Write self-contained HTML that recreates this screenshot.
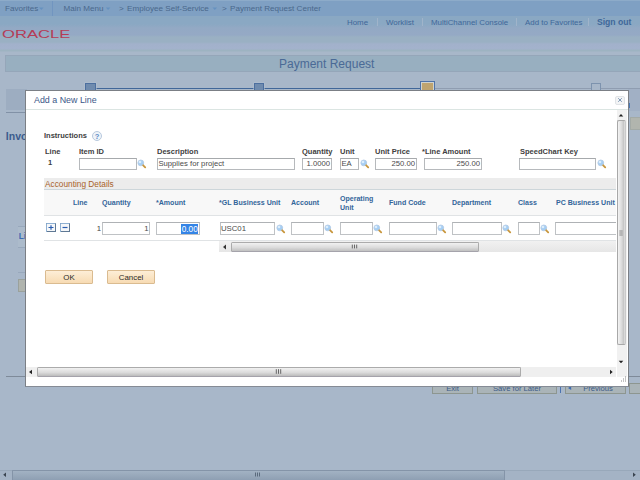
<!DOCTYPE html>
<html><head><meta charset="utf-8"><title>Payment Request</title>
<style>
html,body{margin:0;padding:0;}
body{width:640px;height:480px;overflow:hidden;position:relative;background:#a8b7c9;font-family:"Liberation Sans",sans-serif;font-size:7.5px;color:#333;}
.a{position:absolute;white-space:nowrap;line-height:1;}
#hdr{left:0;top:0;width:640px;height:52px;background:linear-gradient(#8aa8c3 0,#8aa8c3 24px,#93a9c4 28px,#95a9c5 35px,#9ab0c3 37px,#9ab0c3 42px,#a2b1cb 44px,#a3b2cc 49px,#9db3c1 50px,#9db3c1 51px,#a8b7c9 52px);}
#nav{left:0;top:0;width:640px;height:16px;background:#7fa0c3;border-top:1px solid #8dabc9;box-sizing:border-box}
.nv{top:5px;font-size:8.1px;color:#4a688c;}
.hl{top:18.5px;font-size:7.9px;color:#3f6799;}
#ttl{left:5px;top:55px;width:640px;height:17px;background:#98afc0;border:1px solid #95a6b9;box-sizing:border-box;}
#dlg{left:25px;top:90px;width:604px;height:296.500px;background:#fff;border:1px solid #7b7f85;border-bottom-color:#858b95;box-sizing:border-box;}
.lb{font-weight:bold;font-size:7.5px;color:#404040;}
.ch{font-weight:bold;font-size:7.050px;color:#33659a;}
.in{box-sizing:border-box;border:1px solid #b6b9bc;border-top-color:#a6a9ac;background:#fff;height:12px;font-size:7.7px;color:#4a4a4a;padding:1.700px 1px 0 0.400px;line-height:1;overflow:hidden;}
.r{text-align:right;}
.bt{box-sizing:border-box;border:1px solid #dabb90;border-radius:1px;background:linear-gradient(#fdeed7,#f7dbb3);height:13.5px;font-size:7.9px;color:#2a2a2a;text-align:center;padding-top:2.6px;}
.bb{box-sizing:border-box;border:1px solid #8d9690;background:#aab4b8;height:11px;font-size:7.65px;color:#3d5c88;text-align:center;padding-top:1px;}
</style></head><body>
<div class="a" id="hdr"></div>
<div class="a" id="nav"></div>
<div class="a nv" style="left:5px">Favorites</div>
<div class="a nv" style="left:63.5px">Main Menu</div>
<div class="a nv" style="left:119px">&gt;</div>
<div class="a nv" style="left:127px">Employee Self-Service</div>
<div class="a nv" style="left:222px">&gt;</div>
<div class="a nv" style="left:230px">Payment Request Center</div>
<div class="a" style="left:52px;top:1px;width:1px;height:15px;background:#7195c0;"></div>
<svg class="a" style="left:0;top:0" width="640" height="20"><path d="M39 7.500h4.600l-2.300 2.600zM105.800 7.500h4.600l-2.300 2.600zM212.500 7.500h4.600l-2.300 2.600z" fill="#6691c0"/></svg>
<div class="a" style="left:2px;top:28.600px;font-size:11.300px;color:#b53c56;transform:scaleX(1.47);transform-origin:0 0;">ORACLE</div>
<div class="a hl" style="left:347px">Home</div>
<div class="a hl" style="left:386px">Worklist</div>
<div class="a hl" style="left:431px">MultiChannel Console</div>
<div class="a hl" style="left:525px">Add to Favorites</div>
<div class="a hl" style="left:597px;font-weight:bold;font-size:8.600px;top:17.500px">Sign out</div>
<div class="a" style="left:377px;top:18px;width:1px;height:8px;background:#a0b4ca;"></div>
<div class="a" style="left:422px;top:18px;width:1px;height:8px;background:#a0b4ca;"></div>
<div class="a" style="left:516px;top:18px;width:1px;height:8px;background:#a0b4ca;"></div>
<div class="a" style="left:588px;top:18px;width:1px;height:8px;background:#a0b4ca;"></div>
<div class="a" id="ttl"></div>
<div class="a" style="left:279px;top:58px;font-size:12px;color:#4a6a96;">Payment Request</div>
<div class="a" style="left:90px;top:87.8px;width:337px;height:1.3px;background:#416799;"></div>
<div class="a" style="left:434px;top:87.8px;width:206px;height:1.3px;background:#8f9db1;"></div>
<div class="a" style="left:85px;top:83px;width:10.5px;height:9px;background:#6f8bae;border:1px solid #4c6f9f;box-sizing:border-box;box-shadow:0 0 0 0.500px #b3c1d2"></div>
<div class="a" style="left:253.8px;top:83px;width:10.5px;height:9px;background:#6f8bae;border:1px solid #4c6f9f;box-sizing:border-box;box-shadow:0 0 0 0.500px #b3c1d2"></div>
<div class="a" style="left:419.5px;top:81px;width:15.5px;height:12px;background:#bfa46f;border:1px solid #4f73a8;box-sizing:border-box;box-shadow:inset 0 0 0 1px #cfd3d0"></div>
<div class="a" style="left:591px;top:83px;width:10px;height:9px;background:#a8b7c9;border:1px solid #7d93ae;box-sizing:border-box"></div>
<div class="a" style="left:6px;top:88.8px;width:21px;height:21.7px;background:#9dadc1;"></div>
<div class="a" style="left:628px;top:88.8px;width:12px;height:22.5px;background:#a1b0c5;"></div>
<div class="a" style="left:6px;top:112px;width:21px;height:1px;background:#8191a6;"></div>
<div class="a" style="left:5.800px;top:130.500px;font-size:10.500px;font-weight:bold;color:#3b5c8e;">Invoice</div>
<div class="a" style="left:629.5px;top:117px;width:12px;height:13px;background:#b1b5ae;border:1px solid #a3aaa6;box-sizing:border-box"></div>
<div class="a" style="left:6px;top:376px;width:21px;height:1px;background:#7e8a99;"></div>
<div class="a" style="left:17.7px;top:226.5px;width:9px;height:21px;background:#acbbcb;"></div>
<div class="a" style="left:17.7px;top:226.3px;width:9px;height:1px;background:#98a8bc;"></div>
<div class="a" style="left:17.7px;top:247.3px;width:9px;height:1px;background:#98a8bc;"></div>
<div class="a" style="left:17.7px;top:272px;width:9px;height:1px;background:#98a8bc;"></div>
<div class="a" style="left:18.3px;top:278.8px;width:9px;height:13px;background:#b0b4ae;border:1px solid #9aa19c;box-sizing:border-box"></div>
<div class="a" style="left:18.700px;top:233px;font-size:8.200px;font-weight:bold;color:#3b6cb3;">Line</div>
<div class="a" style="left:628px;top:376px;width:12px;height:1px;background:#7e8a99;"></div>
<div class="a bb" style="left:432px;top:383px;width:41px">Exit</div>
<div class="a bb" style="left:477px;top:383px;width:80px">Save for Later</div>
<div class="a bb" style="left:565px;top:383px;width:61px;padding-left:5px">Previous</div>
<svg class="a" style="left:567px;top:385px" width="6" height="6"><path d="M4.200 1v4l-3.200-2z" fill="#3f6cb0"/></svg>
<div class="a bb" style="left:629px;top:383px;width:20px"></div>
<div class="a" style="left:560px;top:384px;width:1px;height:9px;background:#4b73b0;"></div>
<div class="a" style="left:0px;top:469.5px;width:640px;height:11px;background:#a4b3c5;border-top:1px solid #98a8ba;box-sizing:border-box"></div>
<div class="a" style="left:11.5px;top:469.5px;width:493px;height:11px;background:linear-gradient(#a2b2c3,#8c9db1);border:1px solid #8494a8;border-bottom:none;box-sizing:border-box;border-radius:1px"></div>
<svg class="a" style="left:0;top:469px" width="640" height="11"><path d="M6 3.500v4.400l-2.800-2.200zM633 3.500v4.400l2.800-2.200z" fill="#3a4450"/><path d="M255.500 3.500v4M257.500 3.500v4M259.500 3.500v4" stroke="#5a6a7c" stroke-width="1"/></svg>
<div class="a" id="dlg"></div>
<div class="a" style="left:26px;top:109px;width:602px;height:1px;background:#dbe5e2;"></div>
<div class="a" style="left:34px;top:96.400px;font-size:8.900px;color:#3b5888;">Add a New Line</div>
<div class="a" style="left:615px;top:95.500px;width:10px;height:9.500px;border:1px solid #e1e4e7;border-radius:2px;box-sizing:border-box;background:#f3f4f5"></div>
<svg class="a" style="left:615px;top:95px" width="10" height="10"><path d="M3.200 3.200l3.600 3.600M6.800 3.200l-3.600 3.600" stroke="#7f9ab8" stroke-width="1"/></svg>
<div class="a" style="left:628.5px;top:102.5px;width:1.5px;height:5px;background:#4a7ab8;"></div>
<div class="a lb" style="left:44px;top:132px">Instructions</div>
<svg class="a" style="left:91px;top:130px" width="12" height="12"><circle cx="6" cy="6" r="4.500" fill="#eff4f9" stroke="#b7c9de" stroke-width="1"/><text x="6" y="8.700" font-size="7.500" font-weight="bold" text-anchor="middle" fill="#5b8ac6" font-family="Liberation Sans, sans-serif">?</text></svg>
<div class="a lb" style="left:45px;top:148.400px">Line</div>
<div class="a lb" style="left:79px;top:148.400px">Item ID</div>
<div class="a lb" style="left:157px;top:148.400px">Description</div>
<div class="a lb" style="left:302px;top:148.400px">Quantity</div>
<div class="a lb" style="left:340px;top:148.400px">Unit</div>
<div class="a lb" style="left:375px;top:148.400px">Unit Price</div>
<div class="a lb" style="left:422px;top:148.400px">*Line Amount</div>
<div class="a lb" style="left:520px;top:148.400px">SpeedChart Key</div>
<div class="a lb" style="left:48px;top:159px">1</div>
<div class="a in" style="left:79px;top:157.5px;width:58px;"></div>
<svg class="a" style="left:137px;top:158.5px" width="10" height="10"><circle cx="3.800" cy="3.900" r="2.900" fill="#a6cef3" stroke="#b4cce6" stroke-width="0.900"/><circle cx="3" cy="3" r="1.300" fill="#dceefc"/><path d="M6.200 6.300l2 2" stroke="#c8963c" stroke-width="1.800" stroke-linecap="round"/></svg>
<div class="a in" style="left:157px;top:157.5px;width:138px;">Supplies for project</div>
<div class="a in r" style="left:302px;top:157.5px;width:30px;">1.0000</div>
<div class="a in" style="left:340px;top:157.5px;width:19px;">EA</div>
<svg class="a" style="left:359.5px;top:158.5px" width="10" height="10"><circle cx="3.800" cy="3.900" r="2.900" fill="#a6cef3" stroke="#b4cce6" stroke-width="0.900"/><circle cx="3" cy="3" r="1.300" fill="#dceefc"/><path d="M6.200 6.300l2 2" stroke="#c8963c" stroke-width="1.800" stroke-linecap="round"/></svg>
<div class="a in r" style="left:374.5px;top:157.5px;width:42.5px;">250.00</div>
<div class="a in r" style="left:424px;top:157.5px;width:58px;">250.00</div>
<div class="a in" style="left:519px;top:157.5px;width:77px;"></div>
<svg class="a" style="left:597px;top:158.5px" width="10" height="10"><circle cx="3.800" cy="3.900" r="2.900" fill="#a6cef3" stroke="#b4cce6" stroke-width="0.900"/><circle cx="3" cy="3" r="1.300" fill="#dceefc"/><path d="M6.200 6.300l2 2" stroke="#c8963c" stroke-width="1.800" stroke-linecap="round"/></svg>
<div class="a" style="left:44px;top:177.5px;width:572px;height:11.5px;background:#ececec;"></div>
<div class="a" style="left:44px;top:189px;width:572px;height:1px;background:#cdd6da;"></div>
<div class="a" style="left:45px;top:179.500px;font-size:8.300px;color:#a8622a">Accounting Details</div>
<div class="a" style="left:44px;top:190px;width:572px;height:25px;background:#f8f8f8;"></div>
<div class="a" style="left:44px;top:215px;width:572px;height:1px;background:#e0e3e5;"></div>
<div class="a ch" style="left:73px;top:199px">Line</div>
<div class="a ch" style="left:102px;top:199px">Quantity</div>
<div class="a ch" style="left:156px;top:199px">*Amount</div>
<div class="a ch" style="left:219px;top:199px">*GL Business Unit</div>
<div class="a ch" style="left:291px;top:199px">Account</div>
<div class="a ch" style="left:389px;top:199px">Fund Code</div>
<div class="a ch" style="left:452px;top:199px">Department</div>
<div class="a ch" style="left:518px;top:199px">Class</div>
<div class="a ch" style="left:556px;top:199px">PC Business Unit</div>
<div class="a ch" style="left:340px;top:194px;line-height:9px;white-space:normal;width:40px">Operating<br>Unit</div>
<svg class="a" style="left:46px;top:223px" width="26" height="10"><rect x="0.500" y="0.500" width="9" height="8" fill="#f5f7f9" stroke="#5f7894"/><path d="M0.500 9V0.500H9.500" fill="none" stroke="#8fb0d2"/><path d="M2.500 4.500h5M5 2.200v4.600" stroke="#2a5db0" stroke-width="1.200"/><rect x="14.500" y="0.500" width="9" height="8" fill="#f5f7f9" stroke="#5f7894"/><path d="M14.500 9V0.500H23.500" fill="none" stroke="#8fb0d2"/><path d="M16.500 4.500h5" stroke="#2a5db0" stroke-width="1.200"/></svg>
<div class="a" style="left:96.700px;top:224.800px;font-size:7.800px;color:#444">1</div>
<div class="a in r" style="left:102px;top:222.2px;width:48px;border-color:#bfc2c5;border-top-color:#afb2b5;height:12.500px;padding-top:1.600px;padding-right:0.500px;font-size:7.800px;">1</div>
<div class="a in r" style="left:156px;top:222.2px;width:43.5px;border-color:#bfc2c5;border-top-color:#afb2b5;height:12.500px;padding-top:1.600px;padding-right:0.500px;font-size:7.800px;padding-top:1.300px;padding-right:0.500px"><span style="background:#3484e6;color:#fff;display:inline-block;height:9.500px;line-height:11px;overflow:hidden;padding:0 0.300px;font-size:8.200px;vertical-align:top">0.00</span></div>
<div class="a in" style="left:219.5px;top:222.2px;width:55px;border-color:#bfc2c5;border-top-color:#afb2b5;height:12.500px;padding-top:1.600px;padding-right:0.500px;font-size:7.800px;">USC01</div>
<svg class="a" style="left:275.5px;top:223.5px" width="10" height="10"><circle cx="3.800" cy="3.900" r="2.900" fill="#a6cef3" stroke="#b4cce6" stroke-width="0.900"/><circle cx="3" cy="3" r="1.300" fill="#dceefc"/><path d="M6.200 6.300l2 2" stroke="#c8963c" stroke-width="1.800" stroke-linecap="round"/></svg>
<div class="a in" style="left:291px;top:222.2px;width:33px;border-color:#bfc2c5;border-top-color:#afb2b5;height:12.500px;padding-top:1.600px;padding-right:0.500px;font-size:7.800px;"></div>
<svg class="a" style="left:323.5px;top:223.5px" width="10" height="10"><circle cx="3.800" cy="3.900" r="2.900" fill="#a6cef3" stroke="#b4cce6" stroke-width="0.900"/><circle cx="3" cy="3" r="1.300" fill="#dceefc"/><path d="M6.200 6.300l2 2" stroke="#c8963c" stroke-width="1.800" stroke-linecap="round"/></svg>
<div class="a in" style="left:340px;top:222.2px;width:33px;border-color:#bfc2c5;border-top-color:#afb2b5;height:12.500px;padding-top:1.600px;padding-right:0.500px;font-size:7.800px;"></div>
<svg class="a" style="left:372.5px;top:223.5px" width="10" height="10"><circle cx="3.800" cy="3.900" r="2.900" fill="#a6cef3" stroke="#b4cce6" stroke-width="0.900"/><circle cx="3" cy="3" r="1.300" fill="#dceefc"/><path d="M6.200 6.300l2 2" stroke="#c8963c" stroke-width="1.800" stroke-linecap="round"/></svg>
<div class="a in" style="left:389px;top:222.2px;width:48px;border-color:#bfc2c5;border-top-color:#afb2b5;height:12.500px;padding-top:1.600px;padding-right:0.500px;font-size:7.800px;"></div>
<svg class="a" style="left:436.5px;top:223.5px" width="10" height="10"><circle cx="3.800" cy="3.900" r="2.900" fill="#a6cef3" stroke="#b4cce6" stroke-width="0.900"/><circle cx="3" cy="3" r="1.300" fill="#dceefc"/><path d="M6.200 6.300l2 2" stroke="#c8963c" stroke-width="1.800" stroke-linecap="round"/></svg>
<div class="a in" style="left:452px;top:222.2px;width:50px;border-color:#bfc2c5;border-top-color:#afb2b5;height:12.500px;padding-top:1.600px;padding-right:0.500px;font-size:7.800px;"></div>
<svg class="a" style="left:501.5px;top:223.5px" width="10" height="10"><circle cx="3.800" cy="3.900" r="2.900" fill="#a6cef3" stroke="#b4cce6" stroke-width="0.900"/><circle cx="3" cy="3" r="1.300" fill="#dceefc"/><path d="M6.200 6.300l2 2" stroke="#c8963c" stroke-width="1.800" stroke-linecap="round"/></svg>
<div class="a in" style="left:518px;top:222.2px;width:22px;border-color:#bfc2c5;border-top-color:#afb2b5;height:12.500px;padding-top:1.600px;padding-right:0.500px;font-size:7.800px;"></div>
<svg class="a" style="left:539.5px;top:223.5px" width="10" height="10"><circle cx="3.800" cy="3.900" r="2.900" fill="#a6cef3" stroke="#b4cce6" stroke-width="0.900"/><circle cx="3" cy="3" r="1.300" fill="#dceefc"/><path d="M6.200 6.300l2 2" stroke="#c8963c" stroke-width="1.800" stroke-linecap="round"/></svg>
<div class="a in" style="left:555.3px;top:222.2px;width:60.7px;border-color:#bfc2c5;border-top-color:#afb2b5;height:12.500px;padding-top:1.600px;padding-right:0.500px;font-size:7.800px;border-right:none"></div>
<div class="a" style="left:44px;top:240.3px;width:572px;height:1px;background:#e0e3e5;"></div>
<div class="a" style="left:219px;top:241.3px;width:397px;height:10.7px;background:linear-gradient(#f1f1f1,#e6e6e6);"></div>
<div class="a" style="left:230.5px;top:241.5px;width:248.5px;height:10.3px;background:linear-gradient(#f1f1f1,#dcdcdc 55%,#c0c0c0);box-sizing:border-box;border:1px solid #ababab;border-bottom-color:#a5a3ab;border-radius:1.500px"></div>
<svg class="a" style="left:219px;top:241px" width="397" height="12"><path d="M7 3.500v5l-3-2.500z" fill="#333"/><path d="M133.300 3.600v3.800M135.500 3.600v3.800M137.700 3.600v3.800" stroke="#666" stroke-width="1"/></svg>
<div class="a bt" style="left:45px;top:270.200px;width:48px">OK</div>
<div class="a bt" style="left:107px;top:270.200px;width:48px">Cancel</div>
<div class="a" style="left:617px;top:110px;width:10px;height:267px;background:#f1f1f1;"></div>
<div class="a" style="left:617.3px;top:120.2px;width:9.2px;height:225.3px;background:linear-gradient(90deg,#f4f4f4,#d9d9d9 55%,#c6c6c6 80%,#e4e4e4);box-sizing:border-box;border:1px solid #a8a8a8;border-right-color:#c9c9c9;border-radius:2px"></div>
<svg class="a" style="left:616px;top:111px" width="11" height="266"><path d="M2.700 5.500h4.600l-2.300-2.600zM2.700 249.700h4.600l-2.300 2.600z" fill="#222"/><path d="M3.300 120h3.400M3.300 122h3.400M3.300 124h3.400" stroke="#8c8c8c" stroke-width="1"/></svg>
<div class="a" style="left:26px;top:367px;width:590px;height:10px;background:#efefef;"></div>
<div class="a" style="left:37px;top:367px;width:484px;height:9.5px;background:linear-gradient(#f1f1f1,#dcdcdc 55%,#bcbcbc);box-sizing:border-box;border:1px solid #ababab;border-bottom-color:#a5a3ab;border-radius:1.500px"></div>
<svg class="a" style="left:26px;top:367px" width="602" height="18"><path d="M6 2.800v4.400l-3-2.200zM584 2.800v4.400l2.700-2.200z" fill="#222"/><path d="M250.300 2.200v4.600M252.500 2.200v4.600M254.700 2.200v4.600" stroke="#666" stroke-width="1"/><path d="M599 10h1M597 12h1M599 12h1M595 14h1M597 14h1M599 14h1" stroke="#888" stroke-width="1"/></svg>
</body></html>
